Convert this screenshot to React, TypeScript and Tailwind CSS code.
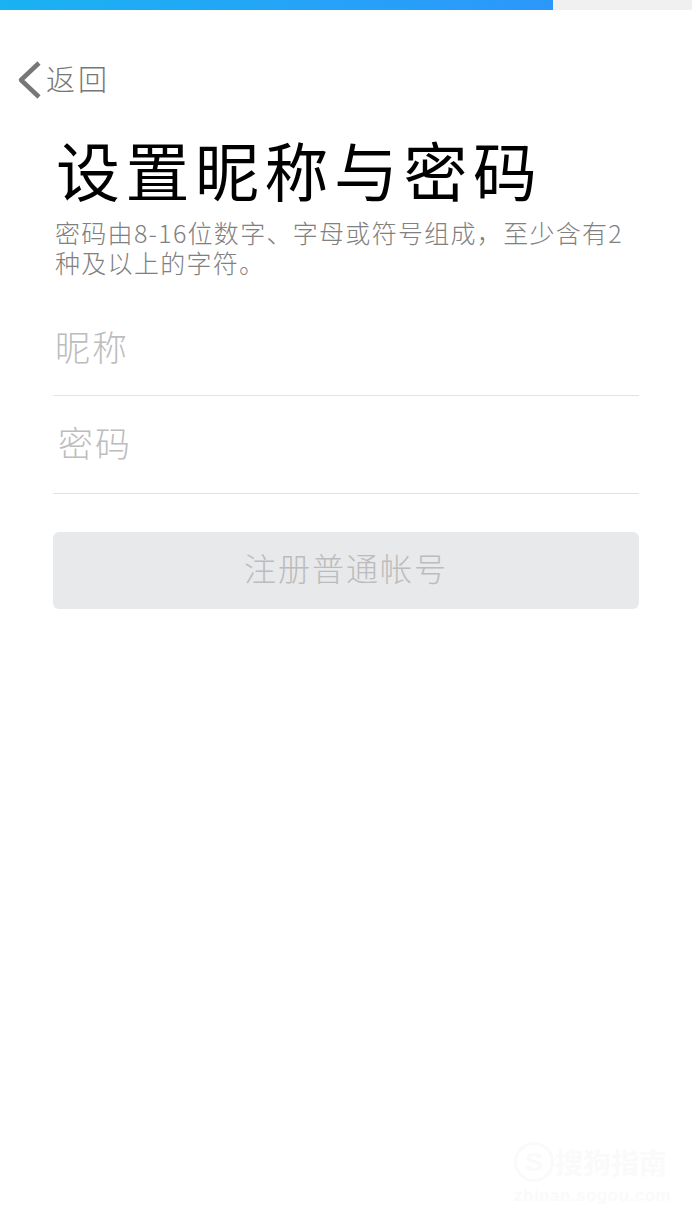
import React from "react";

const cjk = "font-['Noto_Sans_CJK_SC','Noto_Sans_CJK_JP',sans-serif]";

const App: React.FC = () => {
  return (
    <div className={`relative h-[1230px] w-[692px] overflow-hidden bg-white ${cjk}`}>
      {/* progress bar */}
      <div className="h-[10px] w-full bg-[#f0f0f0]">
        <div className="h-full w-[553px] bg-gradient-to-r from-[#19b2f2] to-[#2c97fb]" />
      </div>

      {/* back */}
      <div className="mt-[50px] flex h-[40px] items-center pl-[17px]">
        <svg width="25" height="40" viewBox="0 0 25 40" fill="none">
          <path d="M22 3 L4 20 L22 37" stroke="#777777" strokeWidth="4.5" strokeLinejoin="round" />
        </svg>
        <span className="ml-[4px] pb-[4px] text-[29px] font-extralight leading-[40px] tracking-[3px] text-[#777777]">
          返回
        </span>
      </div>

      <div className="px-[53px]">
        <h1 className="mt-[33px] pl-[3px] text-[64px] font-normal leading-[70px] tracking-[5.5px] text-black">
          设置昵称与密码
        </h1>
        <p className="mt-[14px] w-[586px] pl-[2px] text-[25px] font-extralight leading-[30px] tracking-[1.3px] text-[#808080]">
          密码由8-16位数字、字母或符号组成，至少含有2种及以上的字符。
        </p>

        <div className="mt-[25px] flex h-[94px] items-center border-b border-[#e2e2e2] pb-[4px]">
          <input
            placeholder="昵称"
            className="w-full bg-transparent pl-[2px] text-[35px] font-extralight tracking-[2px] outline-none placeholder:text-[#bdbdbd]"
          />
        </div>
        <div className="flex h-[98px] items-center border-b border-[#e2e2e2] pb-[5px]">
          <input
            type="password"
            placeholder="密码"
            className="w-full bg-transparent pl-[5px] text-[35px] font-extralight tracking-[2px] outline-none placeholder:text-[#bdbdbd]"
          />
        </div>

        <button
          disabled
          className="mt-[38px] flex h-[77px] w-full items-center justify-center rounded-[6px] bg-[#e8e9eb] pb-[7px] text-[32px] font-extralight tracking-[2px] text-[#bcbcbc]"
        >
          注册普通帐号
        </button>
      </div>

      {/* watermark */}
      <div className="absolute left-[514px] top-[1142px] w-[156px] text-[#fafafa]">
        <div className="flex items-center">
          <div className="flex h-[40px] w-[40px] items-center justify-center rounded-full border-[3px] border-[#fafafa] font-['Liberation_Sans',sans-serif] text-[26px] font-bold leading-none">
            S
          </div>
          <span className="ml-[1px] whitespace-nowrap text-[28px] font-bold leading-[40px]">搜狗指南</span>
        </div>
        <div className="mt-[4px] whitespace-nowrap font-['Liberation_Sans',sans-serif] text-[17px] font-bold leading-[20px] tracking-[0.5px]">
          zhinan.sogou.com
        </div>
      </div>
    </div>
  );
};

export default App;
